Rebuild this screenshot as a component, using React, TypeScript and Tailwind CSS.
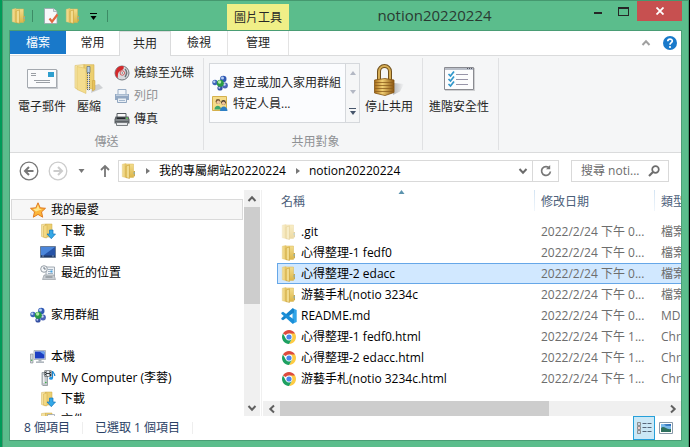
import React from "react";

type IconProps = { className?: string };

function FolderIcon({ className = "h-4 w-4" }: IconProps) {
  return (
    <svg viewBox="0 0 16 16" className={className} aria-hidden="true">
      <defs>
        <linearGradient id="folderLeft" x1="0" y1="0" x2="1" y2="0">
          <stop offset="0" stopColor="#f3df9a" />
          <stop offset="1" stopColor="#e8c765" />
        </linearGradient>
        <linearGradient id="folderRight" x1="0" y1="0" x2="0" y2="1">
          <stop offset="0" stopColor="#f3dd8e" />
          <stop offset="1" stopColor="#dcb648" />
        </linearGradient>
      </defs>
      <path d="M1.300 1.300 5 .5v14l-3.700-.8z" fill="url(#folderLeft)" stroke="#e2c774" strokeWidth=".5" />
      <path d="M5 1h7.500v13.500H5z" fill="url(#folderRight)" stroke="#d8b755" strokeWidth=".5" />
      <path d="M5 3 8.500 1.800V15.600L5 14.600z" fill="#e9cb6a" stroke="#c79f3e" strokeWidth=".5" />
      <path d="M7 3v11.500" stroke="#f8eab2" strokeWidth="1" />
      <path d="M12.500 8h1.500v5l-1.500 1z" fill="#cfa945" />
      <path d="M12.800 9h.8v2.200h-.8z" fill="#6fb2d8" />
    </svg>
  );
}

function DownloadsIcon() {
  return (
    <svg viewBox="0 0 16 16" className="h-4 w-4" aria-hidden="true">
      <path d="M1.500 1.500 5.500 1v14l-4-1.500z" fill="#f5e2a0" stroke="#d4b45a" strokeWidth=".5" />
      <path d="M5.500 1H12v13H5.500z" fill="#eccf72" stroke="#cfa845" strokeWidth=".5" />
      <path d="M3.500 3 7 1.800V15l-3.500-1z" fill="#f3d983" stroke="#cba244" strokeWidth=".4" />
      <path d="M9.500 7h3.500v4h2.500L11.300 15.700 7 11h2.500z" fill="#35a8e6" stroke="#1477ba" strokeWidth=".7" />
    </svg>
  );
}

function DocumentsIcon() {
  return (
    <svg viewBox="0 0 16 16" className="h-4 w-4" aria-hidden="true">
      <path d="M1.500 1.500 5.500 1v14l-4-1.500z" fill="#f5e2a0" stroke="#d4b45a" strokeWidth=".5" />
      <path d="M5.500 1H12v13H5.500z" fill="#eccf72" stroke="#cfa845" strokeWidth=".5" />
      <path d="M7.500 2.500h7v12h-7z" fill="#fafafa" stroke="#8e9aa8" strokeWidth=".7" />
      <path d="M9 5h4M9 7h4M9 9h4" stroke="#7d96b4" strokeWidth=".7" />
    </svg>
  );
}

function StarIcon() {
  return (
    <svg viewBox="0 0 16 16" className="h-4 w-4" aria-hidden="true">
      <path d="M8 .8 10.200 5.800l5.300.5-4 3.600 1.200 5.300L8 12.400l-4.700 2.800 1.200-5.300-4-3.600 5.300-.5z" fill="#fbb63a" stroke="#e07b22" strokeWidth="1" strokeLinejoin="round" />
      <path d="M8 2.800 9.300 6.700l2.700.5L6 9.500l-3-2.400 3.500-.5z" fill="#ffe78e" />
    </svg>
  );
}

function DesktopIcon() {
  return (
    <svg viewBox="0 0 16 16" className="h-4 w-4" aria-hidden="true">
      <path d="M.5 2.500h15v11H.5z" fill="#2653a6" stroke="#6b7d96" />
      <path d="M1 3h14L4 11H1z" fill="#4b86da" />
      <path d="M1 11.500h14V13H1z" fill="#213a66" />
      <path d="M2 12h2M12 12h2" stroke="#9db9dc" strokeWidth=".7" />
    </svg>
  );
}

function RecentIcon() {
  return (
    <svg viewBox="0 0 16 16" className="h-4 w-4" aria-hidden="true">
      <path d="M6 2h8.500v9H6z" fill="#eef2f6" stroke="#8d97a1" strokeWidth=".8" />
      <path d="M8 4.500h5M8 6.500h3M8 8.500h5" stroke="#8ba0b4" strokeWidth=".8" />
      <path d="M10.500 5.500h2v2h-2z" fill="#46a3e0" />
      <path d="M4 10h10l1.500 4.500H2.500z" fill="#c8cdd2" stroke="#8d949b" strokeWidth=".6" />
      <path d="M5.500 12h7" stroke="#757c83" strokeWidth="1" />
      <circle cx="4" cy="4" r="3.300" fill="#f6f8fa" stroke="#8b949d" strokeWidth=".9" />
      <path d="M4 2v2h1.800" fill="none" stroke="#4c5967" strokeWidth=".8" />
    </svg>
  );
}

function HomegroupIcon() {
  return (
    <svg viewBox="0 0 16 16" className="h-4 w-4" aria-hidden="true">
      <circle cx="3" cy="7.500" r="2.700" fill="#3c63b8" />
      <circle cx="2.300" cy="6.700" r="1.200" fill="#b9cff2" />
      <circle cx="11.300" cy="4" r="3.200" fill="#3059b4" />
      <circle cx="10.500" cy="2.900" r="1.500" fill="#b2ccf2" />
      <circle cx="13" cy="10.500" r="2.900" fill="#4a63b6" />
      <circle cx="12.400" cy="9.500" r="1.300" fill="#ccd9f5" />
      <circle cx="8" cy="13" r="2.600" fill="#344fa3" />
      <circle cx="7.300" cy="12.700" r="1" fill="#b4c5ea" />
      <circle cx="8.300" cy="8.200" r="3.500" fill="#2a9a45" />
      <circle cx="7.600" cy="7" r="1.700" fill="#b4e8a4" />
    </svg>
  );
}

function ComputerIcon() {
  return (
    <svg viewBox="0 0 16 16" className="h-4 w-4" aria-hidden="true">
      <path d="M.5 5H3v9H.5z" fill="#d3d8dc" stroke="#7b848c" strokeWidth=".6" />
      <path d="M1.200 10.500h1v1.500h-1z" fill="#3ead47" />
      <path d="M4 1.500h11.500v9H4z" fill="#dfe4e9" stroke="#8a949e" strokeWidth=".6" />
      <path d="M5 2.500h9.500v7H5z" fill="#1c3ec2" />
      <path d="M9.500 2.500h5V6z" fill="#6ba2ee" />
      <path d="M8.500 10.500h3v2h-3z" fill="#aab2ba" />
      <path d="M6 12.500h8v1.300H6z" fill="#9da6af" />
    </svg>
  );
}

function MediaDeviceIcon() {
  return (
    <svg viewBox="0 0 16 16" className="h-4 w-4" aria-hidden="true">
      <path d="M2 2.500h5.500V15.500H2.800L2 14.500z" fill="#c4c9cd" stroke="#7f868c" strokeWidth=".7" />
      <path d="M3 5h1.500v8H3z" fill="#eef0f2" />
      <circle cx="5.800" cy="12.500" r=".8" fill="#2fae3a" />
      <path d="M4.500.5h7v6h-7z" fill="#33383d" />
      <path d="M6.500 1h3v2h-3zM6.500 4h3v2h-3z" fill="#e7edf2" />
      <path d="M5 1.500h.8M5 3.500h.8M5 5.500h.8M10.300 1.500h.8M10.300 3.500h.8" stroke="#fff" strokeWidth=".8" />
      <path d="M12.500 1v7" stroke="#1a86d0" strokeWidth="1.200" />
      <path d="M12.500 1c.3 2 2.500 2 2.300 5" fill="none" stroke="#1a86d0" strokeWidth="1.200" />
      <ellipse cx="11" cy="8.200" rx="1.900" ry="1.500" fill="#2495e0" />
    </svg>
  );
}

function ChromeIcon() {
  return (
    <svg viewBox="0 0 16 16" className="h-4 w-4" aria-hidden="true">
      <circle cx="8" cy="8" r="7" fill="#fff" />
      <path d="M8 8 1.940 4.500A7 7 0 0 1 14.060 4.500z" fill="#dd4b3e" />
      <path d="M8 4.500h6.060A7 7 0 0 1 8 15L11 9.800z" fill="#fdcb43" />
      <path d="M1.940 4.500A7 7 0 0 0 8 15L11 9.750H5z" fill="#1da061" />
      <circle cx="8" cy="8" r="3.400" fill="#fff" />
      <circle cx="8" cy="8" r="2.600" fill="#4a86ee" />
    </svg>
  );
}

function CodeIcon() {
  return (
    <svg viewBox="0 0 16 16" className="h-4 w-4" aria-hidden="true">
      <path d="M11.500.3 15.700 2v12l-4.200 1.700z" fill="#2fa4e8" />
      <path d="M11.500.3 13 1v3.500L2 12.300.3 11.200v-1z" fill="#1583cb" />
      <path d="M11.500 15.700 13 15v-3.500L2 3.700.3 4.800v1z" fill="#1b8fd8" />
    </svg>
  );
}

function ClipboardCheckIcon() {
  return (
    <svg viewBox="0 0 16 16" className="h-4 w-4" aria-hidden="true">
      <path d="M1.500.5h9L14 3.500v12H1.500z" fill="#f7f8fa" stroke="#9aa4ad" strokeWidth=".8" />
      <path d="M10.500.5v3H14" fill="#dfe4e8" stroke="#9aa4ad" strokeWidth=".7" />
      <path d="m6.500 10.500 2.500 3.200 5.500-7.200" fill="none" stroke="#e2673f" strokeWidth="2.200" />
    </svg>
  );
}

function MailIcon() {
  return (
    <svg viewBox="0 0 32 30" className="h-[30px] w-8" aria-hidden="true">
      <path d="M2 6h30v19H2z" fill="#c9ccd0" />
      <path d="M1.500 5.500h29v18h-29z" fill="#fafbfc" stroke="#a4a9af" />
      <path d="M22 8h6v5h-6z" fill="#2f9fce" />
      <path d="M5 9.500h5M5 11.500h5" stroke="#9a9fa5" />
      <path d="M8 16.500h16M10 18.500h14" stroke="#9a9fa5" />
    </svg>
  );
}

function ZipFolderIcon() {
  return (
    <svg viewBox="0 0 30 30" className="h-[30px] w-[30px]" aria-hidden="true">
      <path d="M17 29 29 24 25 20 18 22z" fill="#cfd1d4" />
      <path d="M1 1.500 10 .5v27L1 24z" fill="#f7e7a8" stroke="#dcc06c" strokeWidth=".6" />
      <path d="M10 .7h10v24H10z" fill="#eccf70" stroke="#d4b04d" strokeWidth=".6" />
      <path d="M3 2.500 12 4.500V29.500L3 25.500z" fill="#f4dd8e" stroke="#dabb5c" strokeWidth=".5" />
      <path d="M18.500 16.500h2.500v9l-2.500 1.500z" fill="#e6c25c" stroke="#c89f3c" strokeWidth=".5" />
      <path d="M14.500 3v24" stroke="#5f676f" strokeWidth="3" strokeDasharray="1 1" />
      <path d="M14.500 3v24" stroke="#d9dee3" strokeWidth="1" />
      <path d="M13 2.500h3v6h-3z" fill="#b9d3ea" stroke="#5f6d7c" strokeWidth=".7" />
    </svg>
  );
}

function DiscIcon() {
  return (
    <svg viewBox="0 0 16 16" className="h-4 w-4" aria-hidden="true">
      <circle cx="8" cy="8" r="7" fill="#d8dadd" stroke="#73787d" />
      <path d="M9.500 1.200A7 7 0 0 0 3.500 13.200C4.500 11 3 8.500 5.500 6.500S10.500 5 9.500 1.200z" fill="#d2292b" />
      <path d="M11 4c2 2 2 5 0 8" fill="none" stroke="#6d7277" strokeWidth="1.400" />
      <circle cx="8.300" cy="8" r="2.200" fill="#f6f6f6" stroke="#c23434" strokeWidth=".8" />
      <circle cx="8.300" cy="8" r=".8" fill="#666" />
    </svg>
  );
}

function PrinterIcon() {
  return (
    <svg viewBox="0 0 16 16" className="h-4 w-4" aria-hidden="true">
      <path d="M4 1.500h8v5H4z" fill="#f2f6fa" stroke="#99adc4" />
      <path d="M1 6h14v6H1z" fill="#93a9c4" />
      <path d="M2 6.500h12v1.500H2z" fill="#c3d0df" />
      <path d="M3.500 10h9v4.500h-9z" fill="#e9eff5" stroke="#92a7c0" />
      <path d="M5 12.500h6" stroke="#a4b8ce" />
    </svg>
  );
}

function FaxIcon() {
  return (
    <svg viewBox="0 0 16 16" className="h-4 w-4" aria-hidden="true">
      <path d="M3 2.500h9v4H3z" fill="#fafafa" stroke="#555b60" />
      <path d="M1.500 5.500h13l1 3v4h-15v-4z" fill="#5b6064" />
      <path d="M3 6.500h8v1.500H3z" fill="#24292d" />
      <path d="M12 6.500h2v1.500h-2z" fill="#5ec35a" />
      <path d="M1.500 9h13" stroke="#a8adb1" />
      <path d="M2.500 11.500h11v3h-11z" fill="#e6e8ea" stroke="#777c80" />
    </svg>
  );
}

function PeopleIcon() {
  return (
    <svg viewBox="0 0 16 16" className="h-4 w-4" aria-hidden="true">
      <path d="M.5.5h14v14H.5z" fill="#f5dc8a" stroke="#d4b04d" />
      <circle cx="6" cy="5.500" r="2.400" fill="#7a5a34" />
      <circle cx="6.300" cy="6.300" r="1.700" fill="#f0c9a0" />
      <path d="M2.500 13.500c0-5 6.500-5 6.500 0z" fill="#3ea76d" />
      <circle cx="11.500" cy="6.500" r="2.400" fill="#4a3b2c" />
      <circle cx="11.500" cy="7.300" r="1.700" fill="#eec39b" />
      <path d="M8 15c0-6 7.500-6 7.500 0z" fill="#2d7fc4" />
    </svg>
  );
}

function LockIcon() {
  return (
    <svg viewBox="0 0 32 34" className="h-[34px] w-8" aria-hidden="true">
      <defs>
        <linearGradient id="brass" x1="0" y1="0" x2="1" y2="0">
          <stop offset="0" stopColor="#a66a17" />
          <stop offset=".4" stopColor="#f1cf73" />
          <stop offset="1" stopColor="#8c5510" />
        </linearGradient>
        <linearGradient id="lockShadow" x1="0" y1="0" x2="1" y2="0">
          <stop offset="0" stopColor="#b4b6b9" />
          <stop offset="1" stopColor="#f5f6f7" />
        </linearGradient>
      </defs>
      <path d="M20 31 27 27.500 31 20 21 19z" fill="url(#lockShadow)" />
      <path d="M6 17V7.500a5.500 5.500 0 0 1 11 0V17" fill="none" stroke="#70501d" strokeWidth="4" />
      <path d="M6 17V7.500a5.500 5.500 0 0 1 11 0V17" fill="none" stroke="#d6ad55" strokeWidth="2" />
      <path d="M1.500 16 12 14.500l9 1.500v12.500L12 31.500l-10.500-2.500z" fill="url(#brass)" stroke="#835413" strokeWidth=".8" />
      <path d="M2 18.500h19M2 21.500h19M2 24.500h19M2 27.500h19" stroke="#8d5e1d" strokeWidth=".8" />
    </svg>
  );
}

function SecurityListIcon() {
  return (
    <svg viewBox="0 0 32 30" className="h-[30px] w-8" aria-hidden="true">
      <path d="M2 4h30v23H2z" fill="#cfd0d2" />
      <path d="M1.500 3.500h29v22h-29z" fill="#fcfcfd" stroke="#8a8b91" />
      <path d="M2 4h28v2H2z" fill="#b9bec8" />
      <path d="M24 4.500h1M26 4.500h1M28 4.500h1" stroke="#545966" />
      <path d="M13 10.500h12M13 15.500h12M13 20.500h12" stroke="#9794a8" />
      <path d="m5.500 10 2 2 3.500-4.500M5.500 15l2 2 3.500-4.500M5.500 20l2 2 3.500-4.500" fill="none" stroke="#3197cb" strokeWidth="1.700" />
    </svg>
  );
}

function Triangle({ className }: { className: string }) {
  return (
    <svg viewBox="0 0 6 4" className={className} fill="currentColor" aria-hidden="true">
      <path d="M0 0h6L3 4z" />
    </svg>
  );
}

function Chevron({ className = "" }: IconProps) {
  return (
    <svg viewBox="0 0 10 8" className={`h-2 w-[10px] ${className}`} fill="none" stroke="currentColor" strokeWidth="2" aria-hidden="true">
      <path d="m1.500 2 3.500 3.700L8.500 2" />
    </svg>
  );
}

function RoundArrow({ flip = false, color }: { flip?: boolean; color: string }) {
  return (
    <svg viewBox="0 0 20 20" className={`h-5 w-5 ${flip ? "-scale-x-100" : ""}`} fill="none" stroke={color} aria-hidden="true">
      <circle cx="10" cy="10" r="8.800" strokeWidth="1.300" />
      <path d="M14.500 10H6.500M10 6 6 10l4 4" strokeWidth="2" />
    </svg>
  );
}

function RibbonGroup({ label, className, children }: { label?: string; className: string; children: React.ReactNode }) {
  return (
    <section className={`my-0.5 flex h-[92px] shrink-0 flex-col justify-between border-r border-[#e0e1e3] ${className}`}>
      <div className="flex">{children}</div>
      {label && <div className="text-center text-[#8f9194]">{label}</div>}
    </section>
  );
}

function BigButton({ icon, label, className }: { icon: React.ReactNode; label: string; className: string }) {
  return (
    <button className={`flex shrink-0 flex-col items-center pt-1.5 whitespace-nowrap ${className}`}>
      <span className="flex h-[35px] items-start">{icon}</span>
      <span>{label}</span>
    </button>
  );
}

function SmallButton({ icon, label, disabled = false }: { icon: React.ReactNode; label: string; disabled?: boolean }) {
  return (
    <button disabled={disabled} className="flex h-[23px] items-center gap-1 whitespace-nowrap disabled:text-[#8f9194]">
      {icon}
      {label}
    </button>
  );
}

type NavItem = { icon: React.ReactNode; label: string; child?: boolean; current?: boolean } | null;

const navItems: NavItem[] = [
  { icon: <StarIcon />, label: "我的最愛", current: true },
  { icon: <DownloadsIcon />, label: "下載", child: true },
  { icon: <DesktopIcon />, label: "桌面", child: true },
  { icon: <RecentIcon />, label: "最近的位置", child: true },
  null,
  { icon: <HomegroupIcon />, label: "家用群組" },
  null,
  { icon: <ComputerIcon />, label: "本機" },
  { icon: <MediaDeviceIcon />, label: "My Computer (李蓉)", child: true },
  { icon: <DownloadsIcon />, label: "下載", child: true },
  { icon: <DocumentsIcon />, label: "文件", child: true },
];

const files = [
  { icon: <FolderIcon className="h-4 w-4 opacity-50" />, name: ".git", date: "2022/2/24 下午 0...", type: "檔案" },
  { icon: <FolderIcon />, name: "心得整理-1 fedf0", date: "2022/2/24 下午 0...", type: "檔案" },
  { icon: <FolderIcon />, name: "心得整理-2 edacc", date: "2022/2/24 下午 0...", type: "檔案", selected: true },
  { icon: <FolderIcon />, name: "游藝手札(notio 3234c", date: "2022/2/24 下午 0...", type: "檔案" },
  { icon: <CodeIcon />, name: "README.md", date: "2022/2/24 下午 0...", type: "MD" },
  { icon: <ChromeIcon />, name: "心得整理-1 fedf0.html", date: "2022/2/24 下午 1...", type: "Chro" },
  { icon: <ChromeIcon />, name: "心得整理-2 edacc.html", date: "2022/2/24 下午 1...", type: "Chro" },
  { icon: <ChromeIcon />, name: "游藝手札(notio 3234c.html", date: "2022/2/24 下午 1...", type: "Chro" },
];

function TitleBar() {
  return (
    <header className="flex h-[29px] items-start">
      <div className="flex h-[29px] w-[218px] shrink-0 items-center pl-0.5">
        <FolderIcon />
        <span className="ml-[5px] h-3 w-px bg-[#3d8b66]" />
        <button aria-label="內容" className="ml-2.5">
          <ClipboardCheckIcon />
        </button>
        <button aria-label="新增資料夾" className="ml-1.5">
          <FolderIcon />
        </button>
        <button aria-label="自訂快速存取工具列" className="ml-1.5 flex w-3 flex-col items-center gap-0.5 pt-0.5 text-black">
          <span className="h-px w-[7px] bg-black" />
          <Triangle className="h-1 w-[7px]" />
        </button>
        <span className="ml-2 h-3 w-px bg-[#3d8b66]" />
      </div>
      <div className="mt-[3px] h-[26px] w-[62px] shrink-0 bg-[#f0ef87] pt-1.5 text-center">圖片工具</div>
      <h1 className="min-w-0 flex-1 truncate pt-1 pr-1.5 text-center text-[15px] leading-5 text-[#2a3a32]">notion20220224</h1>
      <button aria-label="最小化" className="flex h-5 w-6 shrink-0 items-center justify-center">
        <span className="mt-1 h-0.5 w-2 bg-[#262626]" />
      </button>
      <button aria-label="最大化" className="flex h-5 w-[27px] shrink-0 items-center justify-center">
        <span className="h-[9px] w-[11px] border border-t-2 border-[#262626]" />
      </button>
      <button aria-label="關閉" className="flex h-5 w-[45px] shrink-0 items-center justify-center bg-[#c75050]">
        <svg viewBox="0 0 8 8" className="h-2 w-2" stroke="#fff" strokeWidth="1.800" aria-hidden="true">
          <path d="m.5.5 7 7M7.500.5l-7 7" />
        </svg>
      </button>
      <div className="w-1.5 shrink-0" />
    </header>
  );
}

function RibbonTabs() {
  return (
    <div role="tablist" className="flex h-[25px] border-b border-[#dadbdc] bg-white">
      <button role="tab" className="h-[23px] w-14 bg-[#1979ca] text-white">檔案</button>
      <button role="tab" className="w-[53px]">常用</button>
      <button role="tab" aria-selected="true" className="-mb-px w-[52px] border-x border-t border-[#dadbdc] bg-[#f5f6f7]">共用</button>
      <button role="tab" className="w-14">檢視</button>
      <button role="tab" className="w-[62px] border-x border-[#e3e3e3]">管理</button>
      <div className="ml-auto flex items-center gap-3 pr-1">
        <button aria-label="最小化功能區">
          <Chevron className="rotate-180 text-[#a0a0a0]" />
        </button>
        <button aria-label="說明">
          <svg viewBox="0 0 14 14" className="h-[14px] w-[14px]" aria-hidden="true">
            <circle cx="7" cy="7" r="7" fill="#1979ca" />
            <path d="M4.800 5.300c0-3 4.600-2.800 4.500-.2C9.300 6.700 7 6.700 7 8.700" fill="none" stroke="#fff" strokeWidth="1.700" />
            <circle cx="7" cy="11" r="1.100" fill="#fff" />
          </svg>
        </button>
      </div>
    </div>
  );
}

function Ribbon() {
  return (
    <div className="flex overflow-hidden border-b border-[#dadbdc] bg-[#f5f6f7]">
      <RibbonGroup label="傳送" className="w-[194px]">
        <BigButton icon={<MailIcon />} label="電子郵件" className="w-16" />
        <BigButton icon={<ZipFolderIcon />} label="壓縮" className="w-[30px]" />
        <div className="ml-2.5 pt-[3px]">
          <SmallButton icon={<DiscIcon />} label="燒錄至光碟" />
          <SmallButton icon={<PrinterIcon />} label="列印" disabled />
          <SmallButton icon={<FaxIcon />} label="傳真" />
        </div>
      </RibbonGroup>
      <RibbonGroup label="共用對象" className="w-[219px] pl-[5px]">
        <div className="mt-[5px] flex h-[60px] w-[151px] shrink-0 border border-[#d5d8dc] bg-[#fbfcfe]">
          <div className="flex-1 pt-2 pl-0.5">
            <button className="flex h-[21px] items-center gap-[5px] whitespace-nowrap">
              <HomegroupIcon />
              建立或加入家用群組
            </button>
            <button className="flex h-[21px] items-center gap-[5px] whitespace-nowrap">
              <PeopleIcon />
              特定人員...
            </button>
          </div>
          <div className="flex w-[14px] flex-col items-center justify-between border-l border-[#d5d8dc] bg-[#f5f6f7] py-[7px] text-[#b3b8c4]">
            <button aria-label="上一列"><Triangle className="h-1 w-1.5 rotate-180" /></button>
            <button aria-label="下一列"><Triangle className="h-1 w-1.5" /></button>
            <button aria-label="更多" className="flex flex-col items-center gap-0.5 text-[#46556b]">
              <span className="h-px w-[7px] bg-[#46556b]" />
              <Triangle className="h-1 w-1.5" />
            </button>
          </div>
        </div>
        <BigButton icon={<LockIcon />} label="停止共用" className="w-[58px]" />
      </RibbonGroup>
      <RibbonGroup className="w-[76px]">
        <BigButton icon={<SecurityListIcon />} label="進階安全性" className="w-[72px]" />
      </RibbonGroup>
    </div>
  );
}

function AddressBar() {
  return (
    <div className="flex items-center pt-[7px] pr-3 pb-2 pl-[9px] text-black">
      <button aria-label="上一頁"><RoundArrow color="#777777" /></button>
      <button aria-label="下一頁" className="ml-[9px]"><RoundArrow flip color="#cccccc" /></button>
      <button aria-label="最近的位置" className="ml-2.5 text-[#777777]"><Triangle className="h-1 w-[7px]" /></button>
      <button aria-label="上移" className="ml-3.5 text-[#777777]">
        <svg viewBox="0 0 12 14" className="h-[14px] w-3" fill="none" stroke="currentColor" strokeWidth="1.800" aria-hidden="true">
          <path d="M6 13V2M2 6l4-4 4 4" />
        </svg>
      </button>
      <nav aria-label="位址" className="ml-[7px] flex h-[22px] min-w-0 flex-1 items-center border border-[#d9d9d9] pl-0.5">
        <FolderIcon />
        <Triangle className="ml-2 h-1 w-1.5 shrink-0 -rotate-90 text-[#777777]" />
        <a href="#site" className="ml-2 whitespace-nowrap">我的專屬網站20220224</a>
        <Triangle className="ml-[9px] h-1 w-1.5 shrink-0 -rotate-90 text-[#777777]" />
        <a href="#notion" className="ml-2 min-w-0 flex-1 truncate">notion20220224</a>
        <button aria-label="先前的位置" className="px-1 text-[#6b6b6b]"><Chevron /></button>
        <button aria-label="重新整理" className="flex h-5 w-[26px] items-center justify-center border-l border-[#d9d9d9]">
          <svg viewBox="0 0 12 12" className="h-3 w-3" fill="none" stroke="#777777" strokeWidth="1.700" aria-hidden="true">
            <path d="M9.500 3.300A4.400 4.400 0 1 0 10.400 6.500" />
            <path d="M10.200 0v4.300H6z" fill="#777777" stroke="none" />
          </svg>
        </button>
      </nav>
      <label className="ml-3 flex h-[22px] w-[98px] items-center border border-[#d9d9d9] pr-2 pl-[9px]">
        <input type="text" aria-label="搜尋" placeholder="搜尋 noti..." className="w-0 min-w-0 flex-1 bg-transparent outline-none placeholder:text-[#6d6d6d]" />
        <svg viewBox="0 0 12 12" className="h-3 w-3 shrink-0" fill="none" stroke="#6d6d6d" aria-hidden="true">
          <circle cx="7.500" cy="4.500" r="3.300" strokeWidth="1.700" />
          <path d="M5 7 1 11" strokeWidth="2.200" />
        </svg>
      </label>
    </div>
  );
}

function NavigationPane() {
  return (
    <aside className="flex w-[252px] shrink-0 border-r border-[#f0f0f0]">
      <ul className="min-w-0 flex-1 overflow-hidden px-px pt-[9px]">
        {navItems.map((item, i) =>
          item ? (
            <li key={i}>
              <a
                href="#folder"
                className={`flex h-[21px] items-center gap-[5px] border whitespace-nowrap ${item.child ? "pl-7" : "pl-[18px]"} ${
                  item.current ? "border-[#dadada] bg-[#f7f7f7]" : "border-transparent"
                }`}
              >
                {item.icon}
                {item.label}
              </a>
            </li>
          ) : (
            <li key={i} className="h-[21px]" />
          ),
        )}
      </ul>
      <div className="mr-px flex w-4 shrink-0 flex-col items-center bg-[#f0f0f0] text-[#606060]">
        <button aria-label="向上捲動" className="flex h-[17px] items-center"><Chevron className="rotate-180" /></button>
        <div className="h-[97px] w-full bg-[#cdcdcd]" />
        <button aria-label="向下捲動" className="mt-auto flex h-[17px] items-center"><Chevron /></button>
      </div>
    </aside>
  );
}

function FileList() {
  const divider = "absolute top-0 left-0 h-[21px] w-px bg-linear-to-b from-[#d3e4f3] to-[#f1f6fb]";
  return (
    <main className="ml-px flex min-w-0 flex-1 flex-col">
      <div className="min-h-0 flex-1 overflow-hidden pl-[14px]">
        <table className="w-full table-fixed border-collapse">
          <thead>
            <tr className="h-[31px] text-left text-[#4c607a]">
              <th className="relative p-0 pb-[7px] pl-1 font-normal">
                名稱
                <Triangle className="absolute top-0 left-1/2 -ml-2 h-1 w-[7px] rotate-180 text-[#5b93ae]" />
              </th>
              <th className="relative w-[120px] p-0 pb-[7px] pl-[7px] font-normal">
                <span className={divider} />
                修改日期
              </th>
              <th className="relative w-[27px] overflow-hidden p-0 pb-[7px] pl-[7px] font-normal whitespace-nowrap">
                <span className={divider} />
                類型
              </th>
            </tr>
          </thead>
          <tbody>
            {files.map((file) => (
              <tr
                key={file.name}
                aria-selected={!!file.selected}
                className={`h-[21px] whitespace-nowrap text-[#6d6d6d] ${
                  file.selected ? "bg-[#d1e8ff] shadow-[inset_1px_1px_#66a7e8,inset_0_-1px_#66a7e8]" : ""
                }`}
              >
                <td className="overflow-hidden p-0 pl-1 text-black">
                  <span className="flex items-center gap-1">
                    {file.icon}
                    {file.name}
                  </span>
                </td>
                <td className="p-0 pl-[7px]">{file.date}</td>
                <td className="overflow-hidden p-0 pl-[7px]">{file.type}</td>
              </tr>
            ))}
          </tbody>
        </table>
      </div>
      <div className="flex h-[15px] shrink-0 items-center bg-[#f0f0f0] text-[#606060]">
        <button aria-label="向左捲動" className="flex w-[17px] justify-center"><Chevron className="rotate-90" /></button>
        <div className="flex h-full flex-1"><div className="w-[70%] bg-[#cdcdcd]" /></div>
        <button aria-label="向右捲動" className="flex w-[17px] justify-center"><Chevron className="-rotate-90" /></button>
      </div>
    </main>
  );
}

function StatusBar() {
  return (
    <footer className="flex h-6 shrink-0 items-center pl-3.5 text-[#2a4165]">
      <span>8 個項目</span>
      <span className="mx-3 h-3 w-px bg-[#eeeeee]" />
      <span>已選取 1 個項目</span>
      <span className="ml-3 h-3 w-px bg-[#eeeeee]" />
      <button aria-label="詳細資料" aria-pressed="true" className="ml-auto flex h-full w-[22px] items-center justify-center border border-[#26a0da] bg-[#cbe8f6]">
        <svg viewBox="0 0 16 14" className="h-[14px] w-4" fill="none" aria-hidden="true">
          <path d="M1.500 1.500h3v3h-3zM1.500 5.500h3v3h-3zM1.500 9.500h3v3h-3z" fill="#fff" stroke="#757575" strokeWidth=".8" />
          <path d="M2.500 3h1M2.500 11h1" stroke="#335a9c" />
          <path d="M2.500 7h1" stroke="#c02828" />
          <path d="M6.500 2.500h4M11.500 2.500h4M6.500 6.500h4M11.500 6.500h4M6.500 10.500h4M11.500 10.500h4" stroke="#56677a" />
        </svg>
      </button>
      <button aria-label="大圖示" className="mr-2 ml-1">
        <svg viewBox="0 0 14 12" className="h-3 w-[14px]" aria-hidden="true">
          <path d="M.5.5h13v11H.5z" fill="#fff" stroke="#8798a8" />
          <path d="M2 2h10v8H2z" fill="#79b9ea" />
          <path d="M2 6c3-3 5 2 10 1v3H2z" fill="#2f715e" />
          <path d="M5 2.500c2 2 5 1 7 1.500V2z" fill="#2868b4" />
        </svg>
      </button>
    </footer>
  );
}

export default function App() {
  return (
    <div className="flex h-screen overflow-hidden bg-[#009b58] pl-0.5 font-['Open_Sans','Noto_Sans_CJK_TC',sans-serif] text-[12px] leading-4 text-[#262626]">
      <div className="flex min-w-0 flex-1 flex-col border-x border-t border-[#45986f] bg-[#5bbd8c] pb-[6px] pl-1.5">
        <TitleBar />
        <div className="mr-1.5 flex min-h-0 flex-1 flex-col border border-[#4a9d75] bg-white">
          <RibbonTabs />
          <Ribbon />
          <AddressBar />
          <div className="flex min-h-0 flex-1 text-black">
            <NavigationPane />
            <FileList />
          </div>
          <StatusBar />
        </div>
      </div>
      <div className="w-px bg-black" />
    </div>
  );
}
